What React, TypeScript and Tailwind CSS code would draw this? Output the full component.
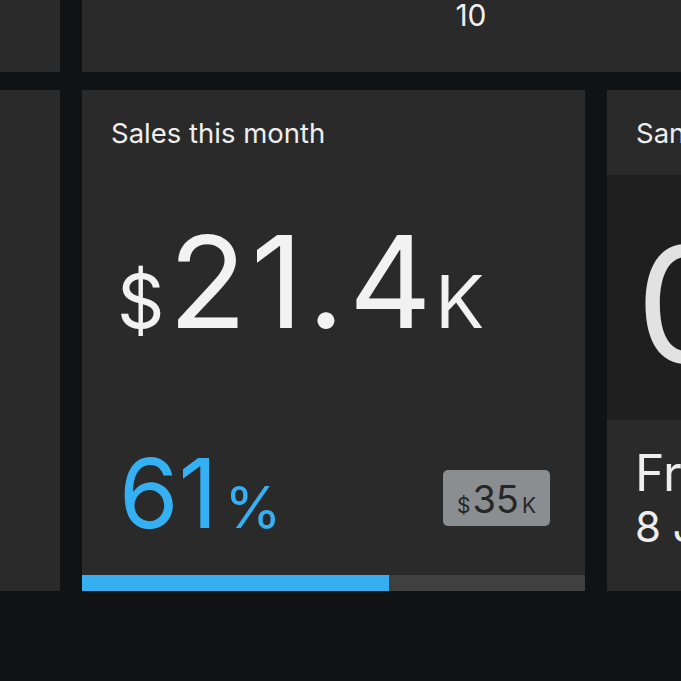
import React from "react";

export default function App() {
  const pct = 61;
  return (
    <div
      className="w-[681px] h-[681px] overflow-hidden bg-[#111214] flex flex-col gap-[18px]"
      style={{ fontFamily: "Inter, 'Noto Sans', sans-serif" }}
    >
      {/* top row */}
      <div className="h-[72px] flex gap-[22px] shrink-0">
        <div className="w-[60px] shrink-0 bg-[#2a2a2a]" />
        <div className="w-[778px] shrink-0 bg-[#2a2a2a] flex justify-center">
          <span className="text-[30px] leading-none text-[#f0f0f0]">10</span>
        </div>
      </div>

      {/* main row */}
      <div className="h-[501px] flex gap-[22px] shrink-0">
        <div className="w-[60px] shrink-0 bg-[#2a2a2a]" />

        {/* Sales card */}
        <div className="w-[503px] shrink-0 bg-[#2a2a2a] flex flex-col">
          <div className="pl-[29px] pt-[30px] text-[27.5px] leading-none text-[#eeeeee] whitespace-nowrap">
            Sales this month
          </div>
          <div className="pl-[35px] mt-[70px] flex items-baseline text-[#f2f2f2] leading-none">
            <span className="text-[74px] mr-[4px]">$</span>
            <span className="text-[128px] tracking-[4.5px]">21.4</span>
            <span className="text-[73px] -ml-[1px]">K</span>
          </div>
          <div className="pl-[37px] pr-[35px] mt-[99px] flex items-end justify-between leading-none">
            <div className="flex items-baseline text-[#35b0f2]">
              <span className="text-[96px]">61</span>
              <span className="text-[58px] ml-[7px]">%</span>
            </div>
            <div className="w-[107px] h-[56px] mb-[15px] rounded-[5px] bg-[#8b8e90] flex items-center justify-center text-[#262626]">
              <div className="flex items-baseline mt-[2px]">
                <span className="text-[21px]">$</span>
                <span className="text-[38px] ml-[2px]">35</span>
                <span className="text-[21px] ml-[3px]">K</span>
              </div>
            </div>
          </div>
          <div className="mt-auto h-[16px] bg-[#404040] flex">
            <div className="h-full bg-[#35aff0]" style={{ width: `${pct}%` }} />
          </div>
        </div>

        {/* right card */}
        <div className="w-[300px] shrink-0 bg-[#2a2a2a] flex flex-col">
          <div className="h-[85px] pl-[29px] pt-[30px] text-[27.5px] leading-none text-[#eeeeee] whitespace-nowrap">
            Sandwiches sold
          </div>
          <div className="h-[245px] bg-[#1f1f1f] pl-[29px] pt-[49px]">
            <span className="text-[160px] leading-none text-[#e2e2e2]">0</span>
          </div>
          <div className="flex-1 pl-[28px] pt-[26px] text-[#eeeeee] whitespace-nowrap">
            <div className="text-[50px] leading-[55px]">Friday</div>
            <div className="text-[42px] leading-[48px] mt-[2px]">8 June</div>
          </div>
        </div>
      </div>
    </div>
  );
}
